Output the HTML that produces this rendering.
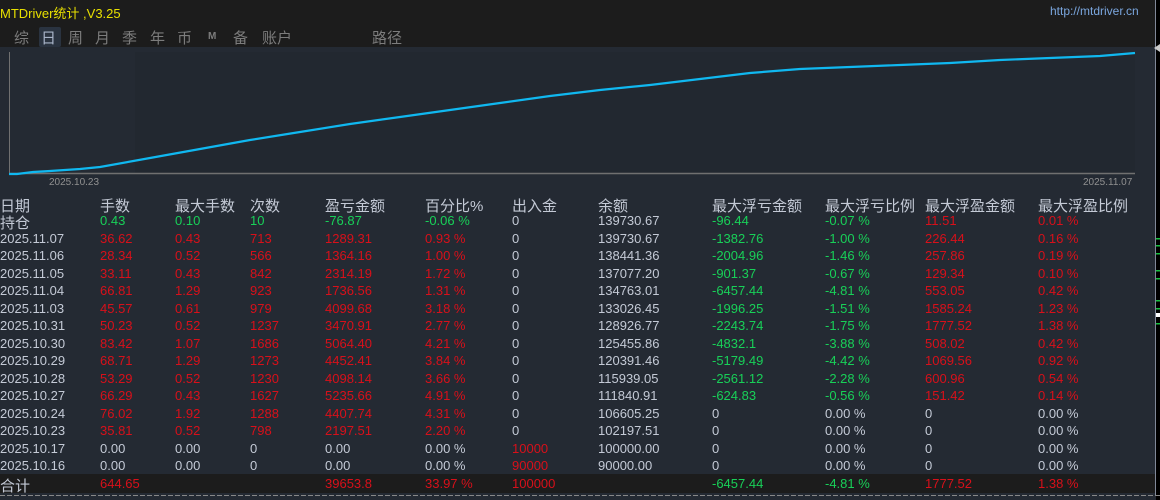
<!DOCTYPE html>
<html><head><meta charset="utf-8"><style>
*{margin:0;padding:0;box-sizing:border-box}
body{width:1160px;height:500px;background:#242a33;position:relative;overflow:hidden;font-family:"Liberation Sans","Noto Sans CJK SC",sans-serif;color:#c4cad6}
.top{position:absolute;left:0;top:0;width:1160px;height:47px;background:#1c1c1c}
.t{position:absolute;white-space:nowrap}
.row{position:absolute;left:0;width:1155px;height:18px;font-size:13px}
.row span{position:absolute;top:1px;white-space:nowrap}
.h{font-size:15px}
.r{color:#d8101a}.g{color:#18d058}
</style></head><body>
<div class="top"></div>
<div class="t" style="left:0;top:3px;font-size:13px;color:#e8e000">MTDriver统计 ,V3.25</div>
<div class="t" style="left:1050px;top:4px;font-size:12px;color:#7aa6de">http://mtdriver.cn</div>
<div style="position:absolute;left:39px;top:27px;width:22px;height:20px;background:#2a3340;border-radius:2px"></div>
<div class="t" style="left:14px;top:27px;font-size:15px;color:#7c7c7c">综</div>
<div class="t" style="left:41px;top:27px;font-size:15px;color:#a8b4c8">日</div>
<div class="t" style="left:68px;top:27px;font-size:15px;color:#7c7c7c">周</div>
<div class="t" style="left:95px;top:27px;font-size:15px;color:#7c7c7c">月</div>
<div class="t" style="left:122px;top:27px;font-size:15px;color:#7c7c7c">季</div>
<div class="t" style="left:150px;top:27px;font-size:15px;color:#7c7c7c">年</div>
<div class="t" style="left:177px;top:27px;font-size:15px;color:#7c7c7c">币</div>
<div class="t" style="left:208px;top:31px;font-size:10px;color:#7c7c7c;font-weight:bold">M</div>
<div class="t" style="left:233px;top:27px;font-size:15px;color:#7c7c7c">备</div>
<div class="t" style="left:262px;top:27px;font-size:15px;color:#7c7c7c">账户</div>
<div class="t" style="left:372px;top:27px;font-size:15px;color:#7c7c7c">路径</div>
<svg style="position:absolute;left:0;top:0" width="1160" height="500">
<rect x="135" y="52" width="1000" height="121" fill="#222830"/>
<line x1="9.5" y1="52" x2="9.5" y2="174" stroke="#707070"/>
<line x1="9" y1="173.5" x2="1135" y2="173.5" stroke="#707070" stroke-width="1.5"/>
<polyline fill="none" stroke="#10b8f0" stroke-width="2.2" points="9,174 17,174 33,172 50,171 80,169 100,167 150,158 200,149 250,140 300,132 350,124 400,117 450,110 500,103 550,96 600,90 650,85 700,79 750,73 800,69 850,67 900,65 950,63 1000,60 1050,58 1100,56 1135,53"/>
<line x1="1155.5" y1="0" x2="1155.5" y2="495" stroke="#808898"/>
<rect x="1156" y="0" width="4" height="500" fill="#000"/>
<rect x="0" y="474" width="1155" height="19" fill="#1c1c1c"/>
<line x1="0" y1="495.5" x2="1160" y2="495.5" stroke="#888" stroke-dasharray="5,2"/>
<g fill="#18c040"><rect x="1156" y="238" width="4" height="1.5"/><rect x="1156" y="245" width="4" height="1.5"/><rect x="1156" y="253" width="4" height="1.5"/><rect x="1156" y="270" width="4" height="1.5"/><rect x="1156" y="278" width="4" height="1.5"/><rect x="1156" y="300" width="4" height="1.5"/><rect x="1156" y="308" width="4" height="1.5"/><rect x="1156" y="323" width="4" height="1.5"/><rect x="1156" y="313" width="4" height="4" fill="#fff"/></g>
<path d="M1160,44 L1154,48 L1160,52Z" fill="#ccc"/>
</svg>
<div class="t" style="left:49px;top:177px;font-size:10px;color:#909090">2025.10.23</div>
<div class="t" style="left:1083px;top:177px;font-size:10px;color:#909090">2025.11.07</div>
<div id="tb"></div>
<script>
var X=[0,100,175,250,325,425,512,598,712,825,925,1038];
var H=["日期","手数","最大手数","次数","盈亏金额","百分比%","出入金","余额","最大浮亏金额","最大浮亏比例","最大浮盈金额","最大浮盈比例"];
var D=[
["持仓","0.43","0.10","10","-76.87","-0.06 %","0","139730.67","-96.44","-0.07 %","11.51","0.01 %","g"],
["2025.11.07","36.62","0.43","713","1289.31","0.93 %","0","139730.67","-1382.76","-1.00 %","226.44","0.16 %"],
["2025.11.06","28.34","0.52","566","1364.16","1.00 %","0","138441.36","-2004.96","-1.46 %","257.86","0.19 %"],
["2025.11.05","33.11","0.43","842","2314.19","1.72 %","0","137077.20","-901.37","-0.67 %","129.34","0.10 %"],
["2025.11.04","66.81","1.29","923","1736.56","1.31 %","0","134763.01","-6457.44","-4.81 %","553.05","0.42 %"],
["2025.11.03","45.57","0.61","979","4099.68","3.18 %","0","133026.45","-1996.25","-1.51 %","1585.24","1.23 %"],
["2025.10.31","50.23","0.52","1237","3470.91","2.77 %","0","128926.77","-2243.74","-1.75 %","1777.52","1.38 %"],
["2025.10.30","83.42","1.07","1686","5064.40","4.21 %","0","125455.86","-4832.1","-3.88 %","508.02","0.42 %"],
["2025.10.29","68.71","1.29","1273","4452.41","3.84 %","0","120391.46","-5179.49","-4.42 %","1069.56","0.92 %"],
["2025.10.28","53.29","0.52","1230","4098.14","3.66 %","0","115939.05","-2561.12","-2.28 %","600.96","0.54 %"],
["2025.10.27","66.29","0.43","1627","5235.66","4.91 %","0","111840.91","-624.83","-0.56 %","151.42","0.14 %"],
["2025.10.24","76.02","1.92","1288","4407.74","4.31 %","0","106605.25","0","0.00 %","0","0.00 %"],
["2025.10.23","35.81","0.52","798","2197.51","2.20 %","0","102197.51","0","0.00 %","0","0.00 %"],
["2025.10.17","0.00","0.00","0","0.00","0.00 %","10000","100000.00","0","0.00 %","0","0.00 %","w"],
["2025.10.16","0.00","0.00","0","0.00","0.00 %","90000","90000.00","0","0.00 %","0","0.00 %","w"],
["合计","644.65","","","39653.8","33.97 %","100000","","-6457.44","-4.81 %","1777.52","1.38 %"]
];
function z(v){return v=='0'||v=='0.00 %';}
var s='<div class="row h" style="top:194px">';
H.forEach(function(h,i){s+='<span style="left:'+X[i]+'px">'+h+'</span>'});s+='</div>';
D.forEach(function(r,k){
 var y=212+k*17.53, last=k==15, m=r[12];
 s+='<div class="row" style="top:'+y+'px">';
 for(var i=0;i<12;i++){
  var c='';
  if(i==0){ if(k==0||last){s+='<span class="h" style="left:0;top:0">'+r[0]+'</span>';continue;} }
  else if(m=='g'){ c=(i>=10)?'r':(i==6||i==7)?'':'g'; }
  else if(m=='w'){ c=(i==6)?'r':''; }
  else {
   if(i>=1&&i<=5)c='r';
   else if(i>=10)c=z(r[i])?'':'r';
   else if(i==8||i==9)c=z(r[i])?'':'g';
   else if(i==6&&last)c='r';
  }
  s+='<span class="'+c+'" style="left:'+X[i]+'px">'+r[i]+'</span>';
 }
 s+='</div>';
});
document.getElementById('tb').innerHTML=s;
</script>
</body></html>
